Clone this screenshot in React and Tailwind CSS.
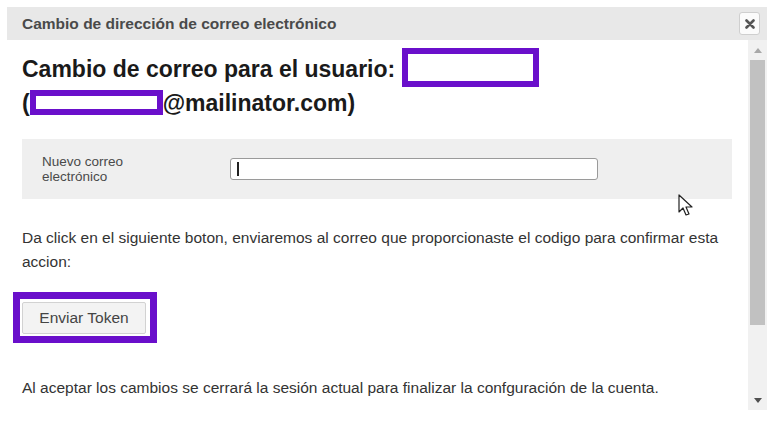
import React from 'react';

// ────────── Scrollbar ──────────
function Scrollbar() {
  return (
    <div className="w-[19px] shrink-0 bg-[#f1f1f1] flex flex-col items-center">
      <div className="h-[20px] w-full flex items-center justify-center">
        <svg width="8" height="5" viewBox="0 0 8 5"><path d="M0 5 L4 0 L8 5 Z" fill="#a8a8a8" /></svg>
      </div>
      <div className="w-[15px] h-[265px] bg-[#c1c1c1]" />
      <div className="flex-1" />
      <div className="h-[20px] w-full flex items-center justify-center">
        <svg width="8" height="5" viewBox="0 0 8 5"><path d="M0 0 L8 0 L4 5 Z" fill="#505050" /></svg>
      </div>
    </div>
  );
}

// ────────── Mouse pointer ──────────
function Pointer() {
  return (
    <svg className="absolute left-[678px] top-[194px]" width="16" height="23" viewBox="0 0 16 23">
      <path d="M1 1 L1 18 L5 14 L8 21 L11 20 L8 13 L14 13 Z" fill="#fff" stroke="#222" strokeWidth="1.2" strokeLinejoin="round" />
    </svg>
  );
}

export default function App() {
  return (
    <div className="relative w-[780px] h-[422px] bg-white overflow-hidden p-[7px] pr-[13px] font-['Liberation_Sans',Arial,sans-serif]">
      <div className="flex flex-col h-[403px]">
        {/* title bar */}
        <div className="h-[33px] shrink-0 bg-[#e8e8e8] flex items-center justify-between pl-[15px] pr-[7px]">
          <span className="text-[15.5px] font-bold text-[#4a4a4a]">Cambio de dirección de correo electrónico</span>
          <button className="w-[21px] h-[23px] bg-[#fbfbfb] border border-[#cfcfcf] rounded-[3px] flex items-center justify-center">
            <svg width="10" height="10" viewBox="0 0 10 10">
              <path d="M1.5 1.5 L8.5 8.5 M8.5 1.5 L1.5 8.5" stroke="#555" strokeWidth="2.6" strokeLinecap="round" />
            </svg>
          </button>
        </div>

        <div className="flex flex-1 min-h-0">
          <div className="flex-1 pl-[15px] pr-[16px] pt-[13px]">
            <h2 className="text-[23px] leading-[32px] font-bold text-[#1a1a1a]">
              <span>Cambio de correo para el usuario: </span>
              <span className="inline-block align-middle w-[137px] h-[39px] border-[6px] border-[#6a0fcb] -mt-[6px]" />
              <br />
              <span>(</span>
              <span className="relative -top-[3px] inline-block align-middle w-[133px] h-[25px] border-[6px] border-[#6a0fcb]" />
              <span>@mailinator.com)</span>
            </h2>

            <div className="mt-[20px] h-[60px] bg-[#efefef] flex items-center pl-[20px]">
              <label className="w-[188px] text-[13.5px] leading-[15px] text-[#4a4a4a]">
                Nuevo correo
                <br />
                electrónico
              </label>
              <div className="relative w-[368px] h-[22px] bg-white border border-[#9a9a9a] rounded-[3px]">
                <div className="absolute left-[6px] top-[3px] w-[2px] h-[14px] bg-[#222]" />
              </div>
            </div>

            <p className="mt-[27px] text-[15.5px] leading-[24px] text-[#333]">
              Da click en el siguiente boton, enviaremos al correo que proporcionaste el codigo para confirmar esta accion:
            </p>

            <div className="mt-[18px] -ml-[9px] w-[144px] h-[51px] border-[7px] border-[#6a0fcb] bg-white flex items-center pl-[2px]">
              <button className="w-[124px] h-[32px] bg-[#f3f3f3] border border-[#d2d2d2] rounded-[2px] text-[15.5px] text-[#444]">
                Enviar Token
              </button>
            </div>

            <p className="mt-[35px] text-[15.5px] leading-[20px] text-[#333]">
              Al aceptar los cambios se cerrará la sesión actual para finalizar la confguración de la cuenta.
            </p>
          </div>
          <Scrollbar />
        </div>
      </div>
      <Pointer />
    </div>
  );
}
